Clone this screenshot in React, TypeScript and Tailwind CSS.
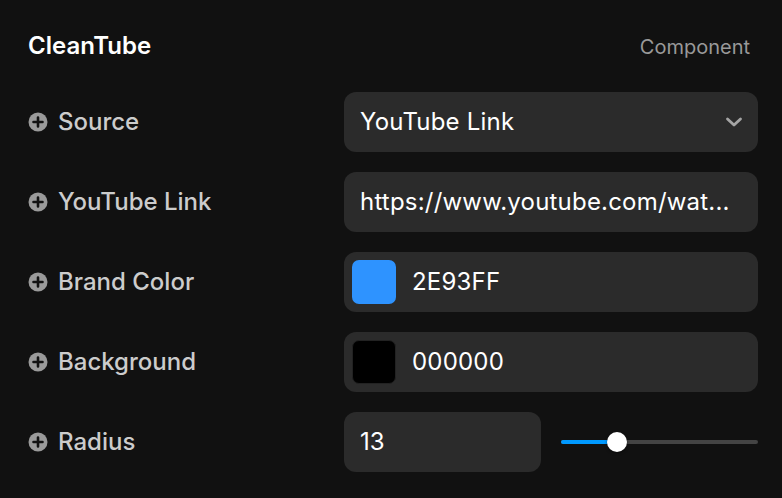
import React from "react";

const font = { fontFamily: "Inter, 'Noto Sans', sans-serif" };

function PlusIcon() {
  return (
    <svg width="20" height="20" viewBox="0 0 20 20" className="shrink-0">
      <circle cx="10" cy="10" r="9.5" fill="#9a9a9a" />
      <path d="M10 5.5v9M5.5 10h9" stroke="#111111" strokeWidth="2.6" strokeLinecap="round" />
    </svg>
  );
}

function Label({ text }: { text: string }) {
  return (
    <div className="flex items-center gap-[10px] w-[316px] shrink-0">
      <PlusIcon />
      <span className="text-[24px] text-[#cccccc] font-medium">{text}</span>
    </div>
  );
}

function Box({ children }: { children: React.ReactNode }) {
  return (
    <div className="flex items-center h-[60px] w-[414px] rounded-[12px] bg-[#2b2b2b] overflow-hidden">{children}</div>
  );
}

export default function App() {
  return (
    <div className="w-[782px] h-[498px] bg-[#111111] pl-[28px] pr-[24px] overflow-hidden" style={font}>
      <div className="flex items-center justify-between h-[92px]">
        <span className="text-[24px] font-semibold text-white">CleanTube</span>
        <span className="text-[20px] text-[#999999] mr-[8px] mt-[2px]">Component</span>
      </div>
      <div className="flex flex-col gap-[20px]">
        <div className="flex items-center">
          <Label text="Source" />
          <Box>
            <span className="pl-[16px] text-[24px] text-white flex-1 tracking-[0.2px]">YouTube Link</span>
            <svg width="18" height="12" viewBox="0 0 18 12" className="mr-[15px]">
              <path d="M2.5 3l6.5 6L15.5 3" stroke="#a5a5a5" strokeWidth="2.8" fill="none" strokeLinecap="round" strokeLinejoin="round" />
            </svg>
          </Box>
        </div>
        <div className="flex items-center">
          <Label text="YouTube Link" />
          <Box>
            <span className="pl-[16px] text-[24px] text-white whitespace-nowrap tracking-[0.2px]">
              https://www.youtube.com/wat...
            </span>
          </Box>
        </div>
        <div className="flex items-center">
          <Label text="Brand Color" />
          <Box>
            <div className="ml-[8px] w-[44px] h-[44px] rounded-[7px] bg-[#2e93ff] shrink-0" />
            <span className="ml-[16px] text-[24px] text-white tracking-[0.2px]">2E93FF</span>
          </Box>
        </div>
        <div className="flex items-center">
          <Label text="Background" />
          <Box>
            <div className="ml-[8px] w-[44px] h-[44px] rounded-[7px] bg-black border border-[#222222] shrink-0" />
            <span className="ml-[16px] text-[24px] text-white tracking-[0.2px]">000000</span>
          </Box>
        </div>
        <div className="flex items-center">
          <Label text="Radius" />
          <div className="flex items-center w-[414px] gap-[20px]">
            <div className="flex items-center h-[60px] w-[197px] rounded-[12px] bg-[#2b2b2b]">
              <span className="pl-[16px] text-[24px] text-white">13</span>
            </div>
            <div className="relative w-[197px] h-[20px] flex items-center">
              <div className="w-full h-[4px] rounded-full bg-[#444444]" />
              <div className="absolute left-0 top-[8px] h-[4px] w-[56px] rounded-full bg-[#0099ff]" />
              <div className="absolute left-[46px] top-0 w-[20px] h-[20px] rounded-full bg-white shadow-[0_1px_3px_rgba(0,0,0,0.5)]" />
            </div>
          </div>
        </div>
      </div>
    </div>
  );
}
